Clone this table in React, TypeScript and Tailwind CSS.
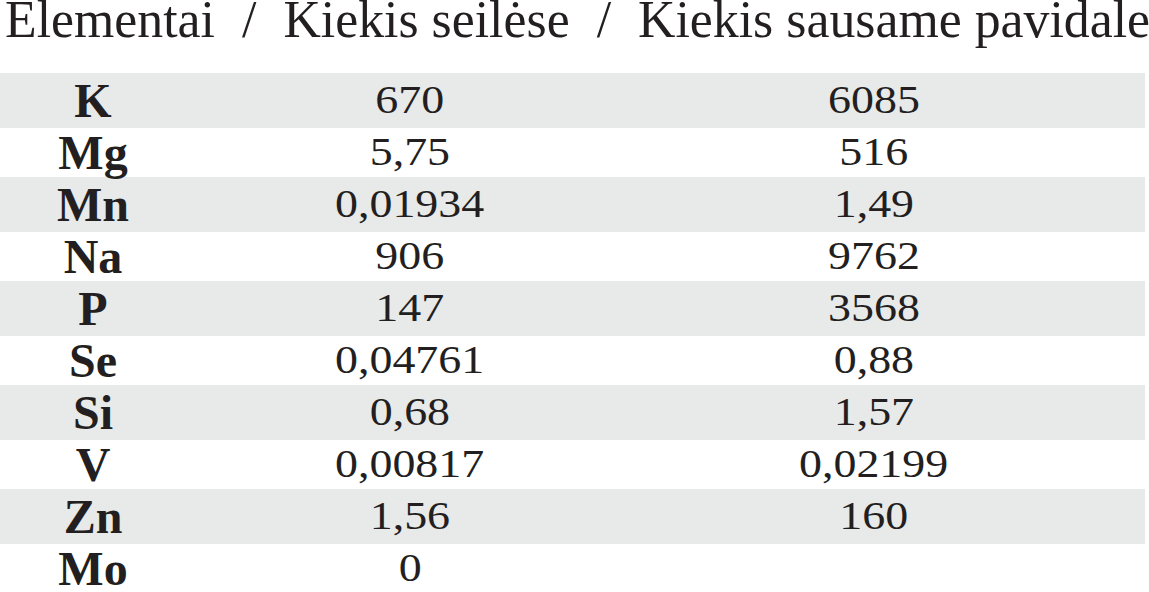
const rows = [
  { el: 'K', saliva: '670', dry: '6085' },
  { el: 'Mg', saliva: '5,75', dry: '516' },
  { el: 'Mn', saliva: '0,01934', dry: '1,49' },
  { el: 'Na', saliva: '906', dry: '9762' },
  { el: 'P', saliva: '147', dry: '3568' },
  { el: 'Se', saliva: '0,04761', dry: '0,88' },
  { el: 'Si', saliva: '0,68', dry: '1,57' },
  { el: 'V', saliva: '0,00817', dry: '0,02199' },
  { el: 'Zn', saliva: '1,56', dry: '160' },
  { el: 'Mo', saliva: '0', dry: '' },
]

function Value({ children }: { children: string }) {
  // numbers in the print are set a bit wider than the font
  return (
    <span className="inline-block scale-x-[1.12] text-[41px] leading-none">{children}</span>
  )
}

export default function App() {
  return (
    <div
      className="h-[592px] w-[1149px] overflow-hidden bg-white text-[#231f20]"
      style={{ fontFamily: '"Liberation Serif", "Times New Roman", serif' }}
    >
      <div className="flex whitespace-nowrap pl-[5px] pt-[2px] text-[51.8px] leading-[35px]">
        <span>Elementai</span>
        <span className="mx-[27px]">/</span>
        <span>Kiekis seilėse</span>
        <span className="mx-[27px]">/</span>
        <span>Kiekis sausame pavidale</span>
      </div>

      <div className="mt-[36px] w-[1145px]">
        {rows.map((r, i) => (
          <div
            key={r.el}
            className={
              i % 2 === 0
                ? 'flex h-[55px] items-center bg-[#e8e9e9]'
                : 'flex h-[49px] items-center'
            }
          >
            <div className="w-[186px] text-center text-[48px] font-bold leading-none">{r.el}</div>
            <div className="w-[448px] pb-[3px] text-center">
              <Value>{r.saliva}</Value>
            </div>
            <div className="w-[480px] pb-[3px] text-center">
              <Value>{r.dry}</Value>
            </div>
          </div>
        ))}
      </div>
    </div>
  )
}
